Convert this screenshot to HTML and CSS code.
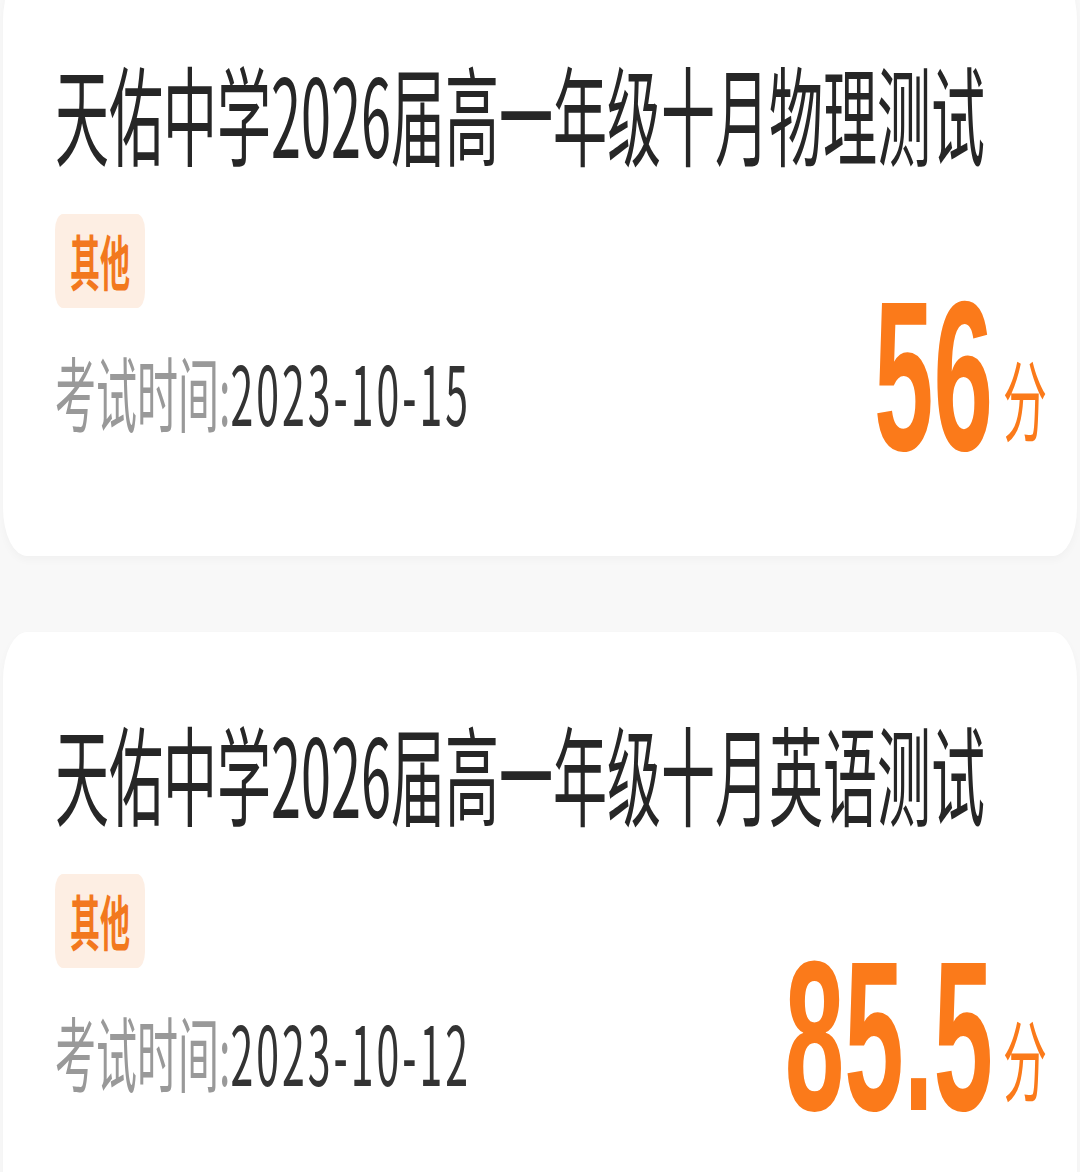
FILE: index.html
```html
<!DOCTYPE html>
<html lang="zh-CN">
<head>
    <meta charset="UTF-8">
    <meta name="viewport" content="width=device-width, initial-scale=1.0">
    <title>考试成绩</title>
    <link rel="stylesheet" href="styles.css">
</head>
<body>
    <div class="page">
        <ul class="exam-list">
            <li class="exam-card">
                <h2 class="exam-title">天佑中学2026届高一年级十月物理测试</h2>
                <div class="exam-body">
                    <div class="exam-info">
                        <span class="exam-tag">其他</span>
                        <p class="exam-date"><span class="label">考试时间:</span><span class="value">2023-10-15</span></p>
                    </div>
                    <div class="exam-score">56<span class="unit">分</span></div>
                </div>
            </li>
            <li class="exam-card">
                <h2 class="exam-title">天佑中学2026届高一年级十月英语测试</h2>
                <div class="exam-body">
                    <div class="exam-info">
                        <span class="exam-tag">其他</span>
                        <p class="exam-date"><span class="label">考试时间:</span><span class="value">2023-10-12</span></p>
                    </div>
                    <div class="exam-score">85.5<span class="unit">分</span></div>
                </div>
            </li>
        </ul>
    </div>
</body>
</html>
```

FILE: styles.css
```css
html {
    overflow: hidden;
    background-color: #f8f8f8;
}

body {
    margin: 0;
    padding: 0;
    min-height: 1172px;
    font-family: "Noto Sans CJK SC", "Noto Sans", sans-serif;
    color: #262626;
}

/* the capture is stretched vertically, so the page is drawn at half height */
.page {
    display: flow-root;
    height: 586px;
    transform: scaleY(2);
    transform-origin: top left;
}

.exam-list {
    list-style: none;
    margin: -14px 0 0;
    padding: 0;
    display: flex;
    flex-direction: column;
    gap: 38px;
}

.exam-card {
    height: 292px;
    box-sizing: border-box;
    margin: 0 3px;
    padding: 40px 30px 0 52px;
    background-color: #ffffff;
    border-radius: 24px;
    box-shadow: 0 2px 6px rgba(0, 0, 0, 0.03);
}

.exam-title {
    margin: 0;
    font-size: 54px;
    font-weight: 400;
    line-height: 60px;
    color: #262626;
    white-space: nowrap;
}

.exam-body {
    display: flex;
    justify-content: space-between;
    align-items: flex-end;
}

.exam-info {
    display: flex;
    flex-direction: column;
    align-items: flex-start;
}

.exam-tag {
    margin-top: 21px;
    height: 47px;
    padding: 0 15px;
    line-height: 47px;
    font-size: 30px;
    font-weight: 700;
    color: #f2781e;
    background-color: #fdeee3;
    border-radius: 8px;
}

.exam-date {
    margin: 17px 0 0;
    font-size: 41px;
    line-height: 48px;
    color: #333333;
}

.exam-date .label {
    color: #999999;
}

.exam-date .value {
    letter-spacing: 3px;
}

.exam-score {
    margin-bottom: -19px;
    font-family: "Liberation Sans", Arial, sans-serif;
    font-size: 107px;
    font-weight: 700;
    line-height: 80px;
    color: #fb7a1a;
    white-space: nowrap;
}

.exam-score .unit {
    margin-left: 10px;
    font-family: "Noto Sans CJK SC", sans-serif;
    font-size: 44px;
    font-weight: 400;
    vertical-align: 8px;
}
```
